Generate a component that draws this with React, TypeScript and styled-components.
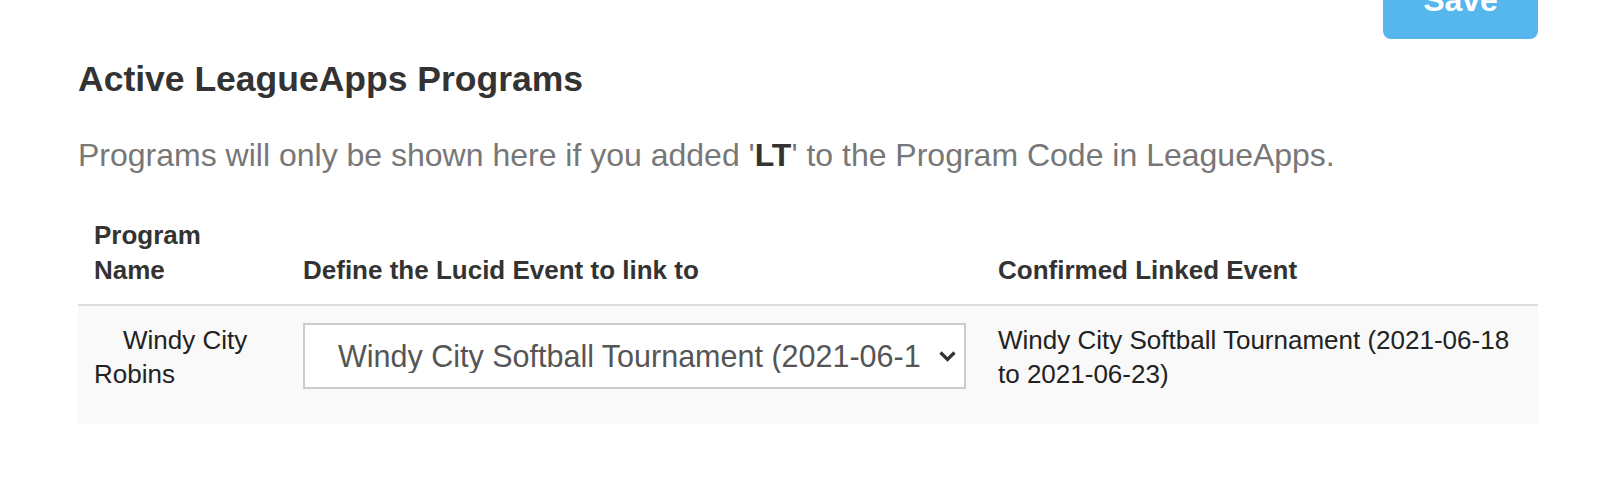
import React from "react";
import styled, { createGlobalStyle } from "styled-components";

const Global = createGlobalStyle`
  html, body { margin: 0; padding: 0; background: #fff; }
  body { font-family: "Liberation Sans", Arial, sans-serif; color: #333; }
`;

const Page = styled.div`
  padding: 0 84px 0 78px;
`;

const Toolbar = styled.div`
  display: flex;
  justify-content: flex-end;
  height: 39px;
`;

const SaveButton = styled.button`
  width: 155px;
  height: 77px;
  margin-top: -38px;
  border: none;
  border-radius: 8px;
  background: #55b7ee;
  color: #fff;
  font-family: "Liberation Sans", Arial, sans-serif;
  font-weight: 700;
  font-size: 32px;
  padding: 0;
  line-height: 77px;
  cursor: pointer;
`;

const Title = styled.h2`
  margin: 19px 0 0;
  font-size: 35.5px;
  line-height: 42px;
  font-weight: 700;
  color: #333;
`;

const Note = styled.p`
  margin: 35px 0 0;
  font-size: 32px;
  line-height: 40px;
  color: #777;
  b { color: #333; }
`;

const Table = styled.table`
  width: 100%;
  margin-top: 43px;
  border-collapse: collapse;
  table-layout: fixed;
`;

const Th = styled.th<{ $w?: number }>`
  box-sizing: border-box;
  width: ${(p) => (p.$w ? `${p.$w}px` : "auto")};
  text-align: left;
  vertical-align: bottom;
  padding: 0 16px 16px;
  font-size: 26px;
  line-height: 35px;
  font-weight: 700;
  color: #333;
  border-bottom: 2px solid #ddd;
`;

const Row = styled.tr`
  background: #f9f9f9;
`;

const Td = styled.td`
  vertical-align: top;
  padding: 17px 16px 33px;
  font-size: 26px;
  line-height: 34px;
  color: #222;
`;

const NameCell = styled(Td)`
  text-indent: 29px;
`;

const SelectBox = styled.div`
  position: relative;
  height: 66px;
  box-sizing: border-box;
  border: 2px solid #ccc;
  background: #fff;
  display: flex;
  align-items: center;
  padding: 0 43px 0 33px;
`;

const SelectText = styled.span`
  white-space: nowrap;
  overflow: hidden;
  font-size: 30.5px;
  color: #555;
`;

const Chevron = styled.svg`
  position: absolute;
  right: 6px;
  top: 50%;
  transform: translateY(-50%);
`;

export default function App() {
  return (
    <>
      <Global />
      <Page>
        <Toolbar>
          <SaveButton>Save</SaveButton>
        </Toolbar>
        <Title>Active LeagueApps Programs</Title>
        <Note>
          Programs will only be shown here if you added '<b>LT</b>' to the Program Code in LeagueApps.
        </Note>
        <Table>
          <thead>
            <tr>
              <Th $w={209}>Program Name</Th>
              <Th $w={695}>Define the Lucid Event to link to</Th>
              <Th>Confirmed Linked Event</Th>
            </tr>
          </thead>
          <tbody>
            <Row>
              <NameCell>Windy City Robins</NameCell>
              <Td>
                <SelectBox>
                  <SelectText>Windy City Softball Tournament (2021-06-18 to 2021-06-23)</SelectText>
                  <Chevron width="21" height="14" viewBox="0 0 21 14">
                    <path d="M3.5 3.5 L10.5 10.5 L17.5 3.5" fill="none" stroke="#333" strokeWidth="3.2" />
                  </Chevron>
                </SelectBox>
              </Td>
              <Td>Windy City Softball Tournament (2021-06-18 to 2021-06-23)</Td>
            </Row>
          </tbody>
        </Table>
      </Page>
    </>
  );
}
